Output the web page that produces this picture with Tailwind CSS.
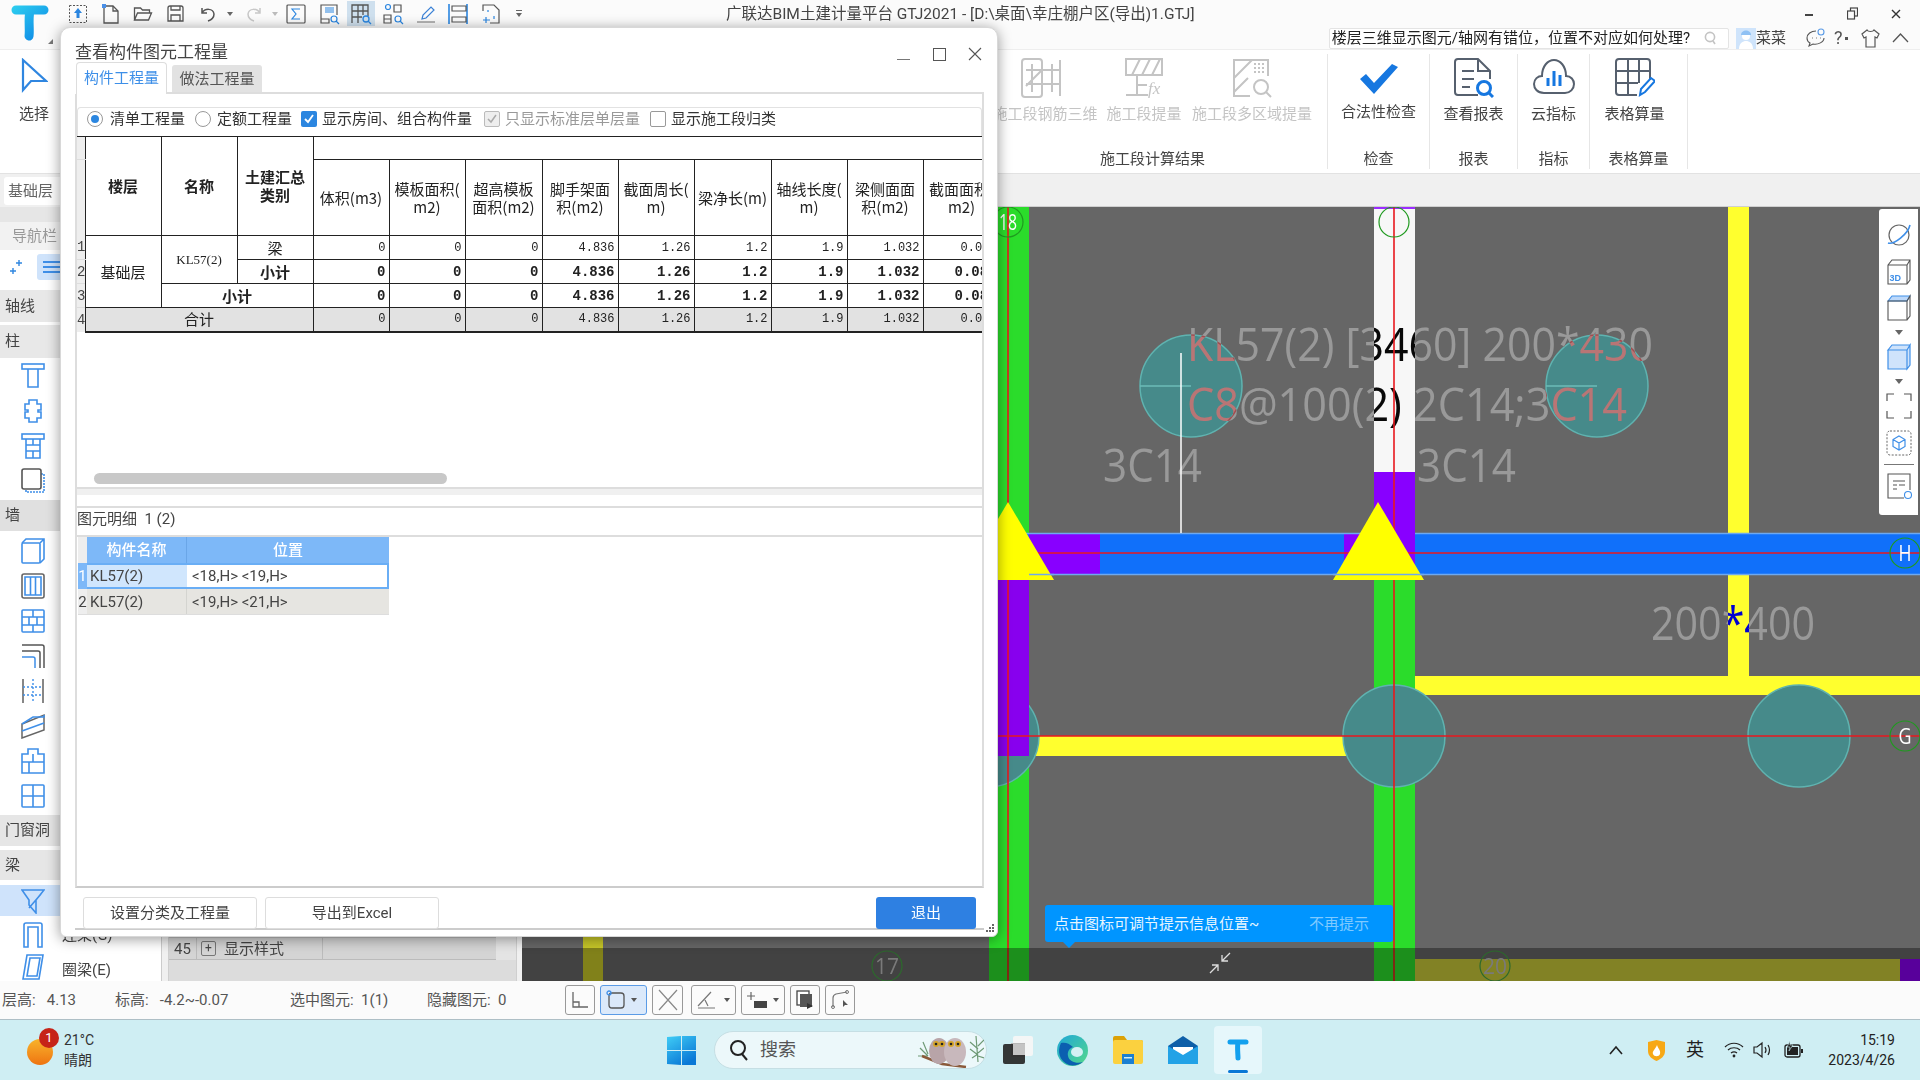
<!DOCTYPE html>
<html lang="zh-CN">
<head>
<meta charset="UTF-8">
<title>广联达BIM土建计量平台 GTJ2021</title>
<script src="https://cdn.jsdelivr.net/npm/@tailwindcss/browser@4"></script>
</head>
<body class="m-0">
<div class="relative w-[1920px] h-[1080px] overflow-hidden flex flex-col bg-white text-[#333] text-[15px] leading-[20px] font-['Roboto','Noto_Sans_CJK_SC',sans-serif]">

  <!-- title bar -->
  <div class="h-[50px] flex bg-[#fbfbfb] border-b border-[#eeeeee] shrink-0">
    <div class="relative w-[62px] shrink-0">
      <svg class="absolute left-[10px] top-[4px]" width="40" height="38" viewBox="0 0 40 38">
        <defs><linearGradient id="logoT" gradientUnits="userSpaceOnUse" x1="0" y1="0" x2="30" y2="38"><stop offset="0" stop-color="#2fd3f0"/><stop offset="1" stop-color="#0d87e6"/></linearGradient></defs>
        <path d="M6 6H34M20 6C18 16 20 26 19 32" fill="none" stroke="url(#logoT)" stroke-width="9" stroke-linecap="round"/>
      </svg>
      <div class="absolute left-[48px] top-[39px] w-0 h-0 border-l-[5px] border-l-transparent border-b-[5px] border-b-[#777]"></div>
    </div>
    <div class="flex-1 flex flex-col">
      <div class="h-[27px] flex items-center">
        <div class="flex items-center text-[#555]">
          <div class="w-[32.5px] h-[26px] flex items-center justify-center"><svg width="20" height="20" viewBox="0 0 20 20" fill="none"><rect x="1.5" y="1.5" width="17" height="17" stroke="#555" stroke-dasharray="2 1.5"/><path d="M10 4l4 5h-2.5v5h-3V9H6z" fill="#2b86e0"/></svg></div>
          <div class="w-[32.5px] h-[26px] flex items-center justify-center"><svg width="20" height="22" viewBox="0 0 20 22" fill="none" stroke="#555" stroke-width="1.3"><path d="M3 3h9l5 5v12H3z"/><path d="M12 3v5h5"/><rect x="1" y="1" width="4" height="4" fill="#4a90e8" stroke="none"/></svg></div>
          <div class="w-[32.5px] h-[26px] flex items-center justify-center"><svg width="20" height="18" viewBox="0 0 20 18" fill="none" stroke="#555" stroke-width="1.3"><path d="M1.5 15V3h6l2 2h7v3M1.5 15l3-7h14l-3 7z"/></svg></div>
          <div class="w-[32.5px] h-[26px] flex items-center justify-center"><svg width="19" height="19" viewBox="0 0 19 19" fill="none" stroke="#555" stroke-width="1.3"><path d="M2 4q0-2 2-2h11q2 0 2 2v13H2z"/><path d="M5 2v4h9V2M5 17v-6h9v6"/></svg></div>
          <div class="w-[32px] h-[26px] flex items-center justify-center"><svg width="18" height="18" viewBox="0 0 18 18" fill="none" stroke="#555" stroke-width="1.5"><path d="M3 3v5h5M3 8c3-5 11-5 12 1 0 4-3 6-6 7"/></svg></div>
          <div class="w-[12px] flex justify-center"><div class="w-0 h-0 border-x-[3px] border-x-transparent border-t-[4px] border-t-[#666]"></div></div>
          <div class="w-[33px] ml-px h-[26px] flex items-center justify-center"><svg width="18" height="18" viewBox="0 0 18 18" fill="none" stroke="#c8c8c8" stroke-width="1.5"><path d="M15 3v5h-5M15 8c-3-5-11-5-12 1 0 4 3 6 6 7"/></svg></div>
          <div class="w-[10px] flex justify-center"><div class="w-0 h-0 border-x-[3px] border-x-transparent border-t-[4px] border-t-[#bbb]"></div></div>
          <div class="w-[32.5px] h-[26px] flex items-center justify-center"><svg width="20" height="20" viewBox="0 0 20 20" fill="none" stroke="#555" stroke-width="1.2"><rect x="1" y="1" width="18" height="18" rx="1"/><path d="M14 5H6l4 5-4 5h8" stroke="#2b86e0"/></svg></div>
          <div class="w-[32.5px] h-[26px] flex items-center justify-center"><svg width="22" height="22" viewBox="0 0 22 22" fill="none" stroke="#555" stroke-width="1.2"><path d="M3 16V2h16v10M3 20v-4h8v4z"/><path d="M7 5h9M7 7h9M7 9h9" stroke="#2b86e0"/><circle cx="16" cy="16" r="3" stroke="#2b86e0"/><path d="M18 18l3 3" stroke="#2b86e0"/></svg></div>
          <div class="w-[28px] mx-[2px] h-[25px] bg-[#cfe0ee] flex items-center justify-center"><svg width="22" height="22" viewBox="0 0 22 22" fill="none" stroke="#555" stroke-width="1.3"><path d="M2 20V2h16v11M2 8h16M2 14h10M8 2v18M13 2v10"/><circle cx="16" cy="16" r="3" stroke="#2b86e0"/><path d="M18 18l3 3" stroke="#2b86e0"/></svg></div>
          <div class="w-[32.5px] h-[26px] flex items-center justify-center"><svg width="22" height="22" viewBox="0 0 22 22" fill="none" stroke="#555" stroke-width="1.2"><circle cx="6" cy="4" r="2.5" stroke="#2b86e0"/><path d="M12 2h7v7h-7zM2 12h7v8H2zM2 16h7"/><circle cx="16" cy="16" r="3" stroke="#2b86e0"/><path d="M18 18l3 3" stroke="#2b86e0"/></svg></div>
          <div class="w-[32.5px] h-[26px] flex items-center justify-center"><svg width="22" height="20" viewBox="0 0 22 20" fill="none" stroke="#555" stroke-width="1.2"><path d="M2 18h18" stroke="#888"/><path d="M7 15l1-4 8-8 3 3-8 8z" stroke="#3b82d6"/></svg></div>
          <div class="w-[32.5px] h-[26px] flex items-center justify-center"><svg width="22" height="22" viewBox="0 0 22 22" fill="none" stroke="#555" stroke-width="1.2"><path d="M2 1v20M20 1v20" stroke-width="1.6" stroke="#2b86e0"/><path d="M5 3h14v5H5zM5 14h14v5H5z"/></svg></div>
          <div class="w-[32.5px] h-[26px] flex items-center justify-center"><svg width="20" height="22" viewBox="0 0 20 22" fill="none" stroke="#555" stroke-width="1.2"><path d="M2 8V2h11l5 5v13H9"/><path d="M7 7v2M13 13v3M2 17h7M5 14v6" stroke="#2b86e0"/></svg></div>
          <div class="w-[24px] flex flex-col items-center gap-[2px]"><div class="w-[6px] h-px bg-[#666]"></div><div class="w-0 h-0 border-x-[3px] border-x-transparent border-t-[4px] border-t-[#666]"></div></div>
        </div>
        <div class="ml-[195px] text-[15.5px] leading-[26px] text-[#444] whitespace-nowrap">广联达BIM土建计量平台 GTJ2021 - [D:\桌面\幸庄棚户区(导出)1.GTJ]</div>
        <div class="ml-auto flex items-center">
          <div class="w-[8px] h-[2px] mt-[3px] bg-[#444] mr-[34px]"></div>
          <svg class="mr-[33px]" width="11" height="13" viewBox="0 0 11 13" fill="none" stroke="#444" stroke-width="1.2"><rect x="3.5" y="1" width="7" height="8"/><rect x="0.5" y="4" width="7" height="8" fill="#fbfbfb"/></svg>
          <svg class="mr-[19px]" width="10" height="10" viewBox="0 0 10 10" stroke="#333" stroke-width="1.4"><path d="M1 1l8 8M9 1l-8 8"/></svg>
        </div>
      </div>
      <div class="h-[22px] flex items-center">
        <div class="ml-[1267px] w-[400px] h-[21px] bg-white border border-[#e4e4e4] rounded-[2px] flex items-center overflow-hidden">
          <span class="text-[15px] leading-[20px] text-[#222] whitespace-nowrap w-[362px] overflow-hidden text-right pr-[2px]">楼层三维显示图元/轴网有错位，位置不对应如何处理?</span>
          <svg class="ml-[12px]" width="13" height="14" viewBox="0 0 13 14" fill="none" stroke="#c4c4c4" stroke-width="1.6"><circle cx="6" cy="6" r="4.6"/><path d="M9 10l2 3"/></svg>
        </div>
        <svg class="ml-[7px]" width="20" height="21" viewBox="0 0 20 21"><rect width="20" height="21" fill="#cfe4fb"/><circle cx="10" cy="8" r="4" fill="#fff"/><path d="M3 21c0-6 4-8 7-8s7 2 7 8z" fill="#fff"/><path d="M5 7c0-6 10-6 10 0z" fill="#8fc1f4"/></svg>
        <span class="text-[15px] text-[#444] whitespace-nowrap">菜菜</span>
        <svg class="ml-[20px]" width="20" height="20" viewBox="0 0 20 20" fill="none" stroke="#555" stroke-width="1.1"><path d="M10 3C5 3 1 6 1 10c0 2 1 4 3 5l-1 3 4-2c5 1 11-2 11-6"/><circle cx="15" cy="4" r="3" stroke="#5a9be6"/><path d="M6 10h.5M10 10h.5M14 10h.5" stroke-width="1.6"/></svg>
        <span class="ml-[8px] text-[18px] text-[#555]">?</span><div class="ml-[2px] w-[3px] h-[3px] bg-[#555]"></div>
        <svg class="ml-[13px]" width="19" height="19" viewBox="0 0 19 19" fill="none" stroke="#555" stroke-width="1.2"><path d="M6 1L1 5l2 4 2-1v10h9V8l2 1 2-4-5-4c-1 2-6 2-7 0z"/></svg>
        <svg class="ml-[12px]" width="17" height="10" viewBox="0 0 17 10" fill="none" stroke="#555" stroke-width="1.3"><path d="M1 9l7.5-8L16 9"/></svg>
      </div>
    </div>
  </div>

  <!-- ribbon -->
  <div class="h-[124px] shrink-0 flex bg-white border-b border-[#e2e2e2]">
    <div class="w-[60px] flex flex-col items-center pt-[8px]">
      <svg class="ml-[8px]" width="28" height="38" viewBox="0 0 28 38" fill="none" stroke="#2f86e0" stroke-width="2.2"><path d="M3 2v30l8-9h15z"/></svg>
      <div class="mt-[8px] text-[#444] ml-[8px] whitespace-nowrap">选择</div>
    </div>
    <div class="w-[930px]"></div>
    <div class="w-[338px] flex flex-col border-r border-[#e6e6e6] mt-[4px] mb-[4px]">
      <div class="flex text-[#c4c4c4] pt-[4px]">
        <div class="w-[110px] flex flex-col items-center">
          <svg class="mr-[8px]" width="42" height="40" viewBox="0 0 42 40" fill="none" stroke="#c4c4c4" stroke-width="2"><rect x="2" y="1" width="20" height="38" rx="3"/><path d="M6 12h34M6 26h34M12 6v28M22 6v28M32 6v28M6 28L22 12"/><path d="M40 2v36"/></svg>
          <div class="mt-[6px] whitespace-nowrap">施工段钢筋三维</div>
        </div>
        <div class="w-[88px] flex flex-col items-center">
          <svg width="40" height="40" viewBox="0 0 40 40" fill="none" stroke="#c4c4c4" stroke-width="2"><rect x="2" y="1" width="36" height="16"/><path d="M8 17L16 1M18 17L26 1M28 17L36 1M13 17v20M2 37h22M13 27h10"/><text x="24" y="36" font-size="17" font-style="italic" fill="#c4c4c4" stroke="none" font-family="Liberation Serif">fx</text></svg>
          <div class="mt-[6px] whitespace-nowrap">施工段提量</div>
        </div>
        <div class="w-[128px] flex flex-col items-center">
          <svg width="40" height="40" viewBox="0 0 40 40" fill="none" stroke="#c4c4c4" stroke-width="2"><path d="M18 38H2V2h34v16"/><path d="M2 20L20 2M2 34L16 20"/><path d="M22 6h12M22 10h12M22 14h12" stroke-dasharray="2 2"/><circle cx="29" cy="29" r="7"/><path d="M34 34l5 5"/></svg>
          <div class="mt-[6px] whitespace-nowrap">施工段多区域提量</div>
        </div>
      </div>
      <div class="mt-auto pr-[12px] text-center text-[#444]">施工段计算结果</div>
    </div>
    <div class="w-[102px] flex flex-col items-center border-r border-[#e6e6e6] mt-[4px] mb-[4px] pt-[4px]">
      <svg class="mt-[6px] mb-[2px]" width="38" height="30" viewBox="0 0 38 30"><path d="M0 15l6-5 8 9L32 0l6 3-24 27z" fill="#1677e0"/></svg>
      <div class="mt-[6px] text-[#444] whitespace-nowrap">合法性检查</div>
      <div class="mt-auto text-[#444]">检查</div>
    </div>
    <div class="w-[88px] flex flex-col items-center border-r border-[#e6e6e6] mt-[4px] mb-[4px] pt-[4px]">
      <svg width="40" height="40" viewBox="0 0 40 40" fill="none" stroke="#56606e" stroke-width="2"><path d="M24 37H4q-3 0-3-3V4q0-3 3-3h20l12 12v8M24 1v12h12"/><path d="M8 13h12M8 21h12M8 29h8"/><circle cx="30" cy="30" r="6.5" stroke="#1677e0" stroke-width="3"/><path d="M35 35l4 4" stroke="#1677e0" stroke-width="3"/></svg>
      <div class="mt-[6px] text-[#444] whitespace-nowrap">查看报表</div>
      <div class="mt-auto text-[#444]">报表</div>
    </div>
    <div class="w-[72px] flex flex-col items-center border-r border-[#e6e6e6] mt-[4px] mb-[4px] pt-[4px]">
      <svg width="42" height="38" viewBox="0 0 42 38" fill="none" stroke="#56606e" stroke-width="2"><path d="M11 35C4 35 1 30 1 26c0-5 4-8 8-8C9 8 15 2 21 2s12 6 12 16c5 0 8 4 8 8 0 5-4 9-9 9z"/><path d="M15 20v8M21 13v15M27 17v11" stroke="#1677e0" stroke-width="3"/></svg>
      <div class="mt-[8px] text-[#444] whitespace-nowrap">云指标</div>
      <div class="mt-auto text-[#444]">指标</div>
    </div>
    <div class="w-[98px] flex flex-col items-center border-r border-[#e6e6e6] mt-[4px] mb-[4px] pt-[4px]">
      <svg class="mr-[8px]" width="40" height="40" viewBox="0 0 40 40" fill="none" stroke="#56606e" stroke-width="2"><path d="M22 37H4q-3 0-3-3V4q0-3 3-3h28q3 0 3 3v18"/><path d="M1 13h34M1 25h22M13 1v36M24 1v24"/><path d="M25 37l1-6 10-11 4 3-10 11z" stroke="#1677e0"/></svg>
      <div class="mt-[6px] mr-[8px] text-[#444] whitespace-nowrap">表格算量</div>
      <div class="mt-auto text-[#444]">表格算量</div>
    </div>
  </div>

  <!-- sidebar + canvas area -->
  <div class="h-[807px] shrink-0 flex">
    <div class="w-[162px] shrink-0 flex flex-col overflow-hidden bg-white border-r border-[#ccc]">
      <div class="h-[33px] shrink-0 bg-[#f0f0f0] pl-[4px] flex items-center"><div class="w-full h-[28px] bg-white rounded-l-[3px] pl-[4px] text-[#666] leading-[28px]">基础层</div></div>
      <div class="h-[15px] shrink-0 bg-[#e6e6e6]"></div>
      <div class="h-[28px] shrink-0 bg-[#f2f2f2] pl-[12px] leading-[28px] text-[#999]">导航栏</div>
      <div class="h-[33px] shrink-0 flex items-center pl-[10px]">
        <svg width="14" height="16" viewBox="0 0 14 16" stroke="#2f86e0" stroke-width="1.4"><path d="M9 1v6M6 4h6M3 9v6M0 12h6"/></svg>
        <div class="ml-[13px] w-[30px] h-[26px] rounded-[3px] bg-[#cfe3fb] flex flex-col justify-center gap-[3px] pl-[6px]">
          <div class="w-[24px] h-[2px] bg-[#3f8fe8]"></div><div class="w-[24px] h-[2px] bg-[#3f8fe8]"></div><div class="w-[24px] h-[2px] bg-[#3f8fe8]"></div>
        </div>
      </div>
      <div class="h-[7px] shrink-0"></div>
      <div class="h-[32px] shrink-0 bg-[#e8e8e8] pl-[5px] leading-[32px] text-[#444]">轴线</div>
      <div class="h-[3px] shrink-0"></div>
      <div class="h-[33px] shrink-0 bg-[#e8e8e8] pl-[5px] leading-[33px] text-[#444]">柱</div>

      <div class="h-[35px] shrink-0 pl-[21px] flex items-center"><svg width="24" height="26" viewBox="0 0 24 26" fill="none" stroke="#3f8fe8" stroke-width="1.6"><rect x="1" y="1" width="22" height="5"/><path d="M7 6v18h10V6"/></svg></div>
      <div class="h-[35px] shrink-0 pl-[21px] flex items-center"><svg width="24" height="26" viewBox="0 0 24 26" fill="none" stroke="#3f8fe8" stroke-width="1.6"><path d="M8 2h8v4h4v6h-3v2h3v6h-4v4H8v-4H4v-6h3v-2H4V6h4z"/></svg></div>
      <div class="h-[35px] shrink-0 pl-[21px] flex items-center"><svg width="24" height="26" viewBox="0 0 24 26" fill="none" stroke="#3f8fe8" stroke-width="1.6"><rect x="1" y="1" width="22" height="5"/><path d="M5 6v19h14V6M5 12h14M5 18h14M12 6v6M12 18v7"/></svg></div>
      <div class="h-[35px] shrink-0 pl-[21px] flex items-center"><svg width="24" height="26" viewBox="0 0 24 26" fill="none" stroke-width="1.6"><path d="M20 6h3v18H5v-3" stroke="#3f8fe8" stroke-dasharray="2 1"/><rect x="1" y="1" width="19" height="20" rx="2" stroke="#555"/></svg></div>

      <div class="h-[2px] shrink-0"></div>
      <div class="h-[31px] shrink-0 bg-[#e0e0e0] pl-[5px] leading-[31px] text-[#444]">墙</div>
      <div class="h-[2px] shrink-0"></div>

      <div class="h-[35px] shrink-0 pl-[21px] flex items-center"><svg width="24" height="26" viewBox="0 0 24 26" fill="none" stroke="#3f8fe8" stroke-width="1.6"><rect x="1" y="5" width="18" height="20" rx="1"/><path d="M1 5l4-4h18v20l-4 4M19 5l4-4"/></svg></div>
      <div class="h-[35px] shrink-0 pl-[21px] flex items-center"><svg width="24" height="26" viewBox="0 0 24 26" fill="none" stroke-width="1.6"><rect x="1" y="1" width="22" height="24" rx="2" stroke="#666"/><path d="M4 4h16v18H4zM9.500 4v18M14.500 4v18" stroke="#3f8fe8"/></svg></div>
      <div class="h-[35px] shrink-0 pl-[21px] flex items-center"><svg width="24" height="26" viewBox="0 0 24 26" fill="none" stroke="#3f8fe8" stroke-width="1.6"><rect x="1" y="2" width="22" height="22" rx="1"/><path d="M1 9h22M1 17h22M12 2v7M8 9v8M16 9v8M12 17v7"/></svg></div>
      <div class="h-[35px] shrink-0 pl-[21px] flex items-center"><svg width="24" height="26" viewBox="0 0 24 26" fill="none" stroke-width="1.5"><path d="M1 2h20q2 0 2 2v21M1 8h16q2 0 2 2v15" stroke="#555"/><path d="M1 14h11q2 0 2 2v9" stroke="#3f8fe8"/></svg></div>
      <div class="h-[35px] shrink-0 pl-[21px] flex items-center"><svg width="24" height="26" viewBox="0 0 24 26" fill="none" stroke-width="1.4"><path d="M2 1v24M22 1v24" stroke="#555"/><path d="M12 1v24M2 9h20M2 17h20" stroke="#3f8fe8" stroke-dasharray="2 2"/></svg></div>
      <div class="h-[35px] shrink-0 pl-[21px] flex items-center"><svg width="24" height="26" viewBox="0 0 24 26" fill="none" stroke-width="1.5"><path d="M1 11L23 2v15L1 25z" stroke="#666"/><path d="M1 11L12 4h11L23 2M1 18l22-8" stroke="#3f8fe8"/></svg></div>
      <div class="h-[35px] shrink-0 pl-[21px] flex items-center"><svg width="24" height="26" viewBox="0 0 24 26" fill="none" stroke="#3f8fe8" stroke-width="1.6"><path d="M1 6h6V1h10v5h6v19H1zM1 14h22M12 6v8M8 14v11"/></svg></div>
      <div class="h-[35px] shrink-0 pl-[21px] flex items-center"><svg width="24" height="26" viewBox="0 0 24 26" fill="none" stroke="#3f8fe8" stroke-width="1.6"><rect x="1" y="2" width="22" height="22" rx="1"/><path d="M1 13h22M12 2v22"/></svg></div>

      <div class="h-[2px] shrink-0"></div>
      <div class="h-[31px] shrink-0 bg-[#e6e6e6] pl-[5px] leading-[31px] text-[#444]">门窗洞</div>
      <div class="h-[4px] shrink-0"></div>
      <div class="h-[30px] shrink-0 bg-[#e6e6e6] pl-[5px] leading-[30px] text-[#444]">梁</div>
      <div class="h-[5px] shrink-0"></div>
      <div class="h-[31px] shrink-0 bg-[#cfe3fb] pl-[21px] flex items-center"><svg width="24" height="26" viewBox="0 0 24 26" fill="none" stroke="#3f8fe8" stroke-width="1.6"><path d="M1 2h22l-8 10v13L8 17V12zM8 20L20 6"/></svg></div>
      <div class="h-[37px] shrink-0 pl-[23px] flex items-center"><svg width="20" height="26" viewBox="0 0 20 26" fill="none" stroke="#3f8fe8" stroke-width="1.6"><path d="M1 25V3q0-2 2-2h14q2 0 2 2v22h-4V5H5v20z"/></svg><span class="ml-[19px] text-[#444] whitespace-nowrap">连梁(G)</span></div>
      <div class="h-[28px] shrink-0 pl-[22px] flex items-center"><svg width="22" height="26" viewBox="0 0 22 26" fill="none" stroke="#3f8fe8" stroke-width="1.6"><path d="M5 1h16l-4 24H1zM8 4h10l-3 18H5z"/></svg><span class="ml-[18px] mt-[5px] text-[#444] whitespace-nowrap">圈梁(E)</span></div>
    </div>

    <div class="flex-1 flex flex-col">
      <div class="h-[33px] shrink-0 bg-[#f0f0f0] border-b border-[#cfcfcf]"></div>
      <div class="flex-1 flex">
        <!-- property panel, mostly under the dialog -->
        <div class="w-[6px] bg-[#f0f0f0]"></div>
        <div class="w-[349px] flex flex-col justify-end bg-[#e4e4e4] border-x border-[#cfcfcf]">
          <div class="h-[23px] flex items-center border-y border-[#bbb] mr-[20px] text-[#444] bg-[#d4d4d4]">
            <div class="w-[28px] text-center border-r border-[#bbb] h-full leading-[22px]">45</div>
            <div class="ml-[4px] w-[15px] h-[15px] border border-[#777] rounded-[2px] text-[12px] leading-[12px] text-center">+</div>
            <div class="ml-[8px] w-[99px] h-full leading-[22px] border-r border-[#bbb]">显示样式</div>
          </div>
          <div class="h-[21px] bg-[#dcdcdc]"></div>
        </div>
        <div class="w-[5px] bg-[#f0f0f0]"></div>
        <!-- CAD canvas -->
        <svg class="block" width="1398" height="774" viewBox="522 207 1398 774">
          <rect x="522" y="207" width="1398" height="774" fill="#666666"/>
          <!-- columns and beams -->
          <rect x="583" y="207" width="20" height="774" fill="#c6c628"/>
          <rect x="989" y="207" width="40" height="373" fill="#2bdc2b"/>
          <rect x="989" y="580" width="40" height="176" fill="#8800ee"/>
          <rect x="989" y="756" width="40" height="225" fill="#2bdc2b"/>
          <rect x="1374" y="207" width="41" height="265" fill="#f7f7f7"/>
          <rect x="1374" y="207" width="41" height="2" fill="#9a2cff"/>
          <rect x="1374" y="472" width="41" height="61" fill="#8800ff"/>
          <rect x="1374" y="574" width="41" height="407" fill="#2bdc2b"/>
          <rect x="1728" y="207" width="21" height="469" fill="#ffff2e"/>
          <rect x="1415" y="676" width="505" height="19" fill="#ffff2e"/>
          <rect x="1029" y="736" width="345" height="20" fill="#ffff2e"/>
          <rect x="998" y="533" width="922" height="41" fill="#1070fa"/>
          <rect x="1029" y="533" width="71" height="41" fill="#8800ff"/>
          <rect x="1344" y="533" width="71" height="41" fill="#8800ff"/>
          <path d="M1008 533.500H1374M1415 533.500H1920M1029 574.500H1920" stroke="#6ea8ee" stroke-width="1.5"/>
          <!-- piles -->
          <g fill="#468a8a" stroke="#5fb3b0" stroke-width="1.5">
            <circle cx="1191" cy="386" r="51"/>
            <circle cx="1597" cy="386" r="51"/>
            <circle cx="988" cy="736" r="51"/>
            <circle cx="1394" cy="736" r="51"/>
            <circle cx="1799" cy="736" r="51"/>
          </g>
          <rect x="989" y="580" width="40" height="176" fill="#8800ee"/>
          <path d="M1140 386H1191M1546 386H1597" stroke="#6cbcb8" stroke-width="1.5"/>
          <!-- annotations, inverted against what they cross -->
          <g class="mix-blend-difference font-['Open_Sans',sans-serif]" fill="#fff" font-size="45">
            <text x="1187" y="361" textLength="466" lengthAdjust="spacingAndGlyphs">KL57(2) [3460] 200*430</text>
            <text x="1187" y="421" textLength="440" lengthAdjust="spacingAndGlyphs">C8@100(2) 2C14;3C14</text>
            <text x="1103" y="482" textLength="99" lengthAdjust="spacingAndGlyphs">3C14</text>
            <text x="1417" y="482" textLength="99" lengthAdjust="spacingAndGlyphs">3C14</text>
            <text x="1651" y="640" textLength="164" lengthAdjust="spacingAndGlyphs">200*400</text>
          </g>
          <path d="M1181 353V533" stroke="#fff" stroke-width="1.5"/>
          <!-- axes -->
          <path d="M1008 207V981M1394 207V981M998 553H1920M998 736H1920" stroke="#e8181f" stroke-width="1.6"/>
          <path d="M962 580L1008 502L1054 580Z" fill="#ffff00"/>
          <path d="M1333 580L1378 502L1424 580Z" fill="#ffff00"/>
          <path d="M1029 574.500H1054M1333 574.500H1424" stroke="#6ea8ee" stroke-width="1.5"/>
          <g fill="none" stroke="#1f9a1f" stroke-width="1.2">
            <circle cx="1008" cy="222" r="15"/>
            <circle cx="1394" cy="222" r="15"/>
            <circle cx="1905" cy="553" r="15"/>
            <circle cx="1905" cy="736" r="15"/>
          </g>
          <g fill="#fff" font-size="21" text-anchor="middle" class="font-['Open_Sans',sans-serif]">
            <text x="1008" y="230" textLength="18" lengthAdjust="spacingAndGlyphs">18</text>
            <text x="1905" y="561" textLength="13" lengthAdjust="spacingAndGlyphs">H</text>
            <text x="1905" y="744" textLength="13" lengthAdjust="spacingAndGlyphs">G</text>
          </g>
          <!-- dim strip along the bottom -->
          <rect x="1415" y="959" width="485" height="22" fill="#c8c83a"/>
          <rect x="1900" y="959" width="20" height="22" fill="#8800ee"/>
          <rect x="522" y="948" width="1398" height="33" fill="#000" opacity=".35"/>
          <g fill="none" stroke="#2c6a2c" stroke-width="1.2">
            <circle cx="887" cy="966" r="15"/>
            <circle cx="1495" cy="966" r="15"/>
          </g>
          <g fill="#7a7a7a" font-size="21" text-anchor="middle" class="font-['Open_Sans',sans-serif]">
            <text x="887" y="974">17</text>
            <text x="1495" y="974">20</text>
          </g>
          <path d="M1230 953l-8 8M1222 955v6h6M1210 973l8-8M1218 971v-6h-6" fill="none" stroke="#ddd" stroke-width="1.3"/>
        </svg>
      </div>
    </div>
  </div>

  <!-- status bar -->
  <div class="h-[39px] shrink-0 flex items-center bg-[#fbfbfb] border-b border-[#aebfc6] text-[#555] whitespace-nowrap">
    <span class="ml-[2px] w-[113px]">层高:&nbsp;&nbsp;&nbsp;4.13</span>
    <span class="w-[175px]">标高:&nbsp;&nbsp;&nbsp;-4.2~-0.07</span>
    <span class="w-[137px]">选中图元:&nbsp;&nbsp;1(1)</span>
    <span class="w-[138px]">隐藏图元:&nbsp;&nbsp;0</span>
    <div class="flex items-center gap-[5px]">
      <div class="w-[30px] h-[30px] border border-[#999] rounded-[3px] flex items-center justify-center"><svg width="18" height="18" viewBox="0 0 18 18" fill="none" stroke="#666" stroke-width="1.3"><path d="M2 1v15h15M2 11h6v5"/></svg></div>
      <div class="w-[47px] h-[30px] border border-[#5a9be6] bg-[#dbe9fa] rounded-[3px] flex items-center pl-[5px] gap-[5px]"><svg width="20" height="20" viewBox="0 0 20 20" fill="none" stroke="#555" stroke-width="1.3"><rect x="3" y="3" width="15" height="15" rx="3"/><circle cx="3" cy="3" r="2" stroke="#3f8fe8"/></svg><div class="w-0 h-0 border-x-[3px] border-x-transparent border-t-[4px] border-t-[#555]"></div></div>
      <div class="w-[31px] h-[30px] border border-[#999] rounded-[3px] flex items-center justify-center"><svg width="22" height="24" viewBox="0 0 22 24" stroke="#888" stroke-width="1.2"><path d="M2 2l18 20M20 2L2 22"/></svg></div>
      <div class="ml-[3px] w-[45px] h-[30px] border border-[#999] rounded-[3px] flex items-center pl-[5px] gap-[7px]"><svg width="20" height="20" viewBox="0 0 20 20" fill="none" stroke="#777" stroke-width="1.2"><path d="M1 16L14 2M1 18h17M8 10l3 6"/></svg><div class="w-0 h-0 border-x-[3px] border-x-transparent border-t-[4px] border-t-[#555]"></div></div>
      <div class="w-[44px] h-[30px] border border-[#999] rounded-[3px] flex items-center pl-[4px] gap-[5px]"><svg width="22" height="20" viewBox="0 0 22 20"><path d="M5 2v8M1 6h8" stroke="#666" stroke-width="1.2"/><rect x="8" y="11" width="13" height="7" fill="#444"/></svg><div class="w-0 h-0 border-x-[3px] border-x-transparent border-t-[4px] border-t-[#555]"></div></div>
      <div class="w-[30px] h-[30px] border border-[#999] rounded-[3px] flex items-center justify-center"><svg width="20" height="22" viewBox="0 0 20 22"><rect x="2" y="2" width="12" height="14" fill="#fff" stroke="#444" stroke-width="1.3"/><rect x="5" y="5" width="12" height="13" fill="#555"/><path d="M12 14l6 3-6 3z" fill="#333"/></svg></div>
      <div class="w-[30px] h-[30px] border border-[#999] rounded-[3px] flex items-center justify-center"><svg width="20" height="22" viewBox="0 0 20 22" fill="none"><path d="M3 18V9q0-3 3-4l11-2" stroke="#777" stroke-width="1.2"/><circle cx="3" cy="18" r="1.5" stroke="#777"/><circle cx="17" cy="3" r="1.5" stroke="#777"/><path d="M13 11l5 5h-3l-2 2z" fill="#555"/></svg></div>
    </div>
  </div>

  <!-- taskbar -->
  <div class="h-[60px] shrink-0 flex items-center bg-[#cfeef3] text-[#222]">
    <div class="w-[667px] shrink-0 flex items-center">
      <div class="relative ml-[27px] w-[26px] h-[26px] mt-[4px] rounded-full bg-gradient-to-b from-[#f7b32b] to-[#ee7310]">
        <div class="absolute left-[12px] top-[-11px] w-[20px] h-[20px] rounded-full bg-[#c62418] text-white text-[13px] leading-[20px] text-center">1</div>
      </div>
      <div class="ml-[11px] text-[14px] leading-[20px] text-[#333]"><div>21°C</div><div>晴朗</div></div>
    </div>
    <svg class="shrink-0" width="29" height="29" viewBox="0 0 29 29">
      <defs><linearGradient id="winG" x1="0" y1="0" x2="0.6" y2="1"><stop offset="0" stop-color="#40cdf6"/><stop offset="1" stop-color="#0a78d6"/></linearGradient></defs>
      <path d="M0 1L14 0V14H0zM15 0H29V14H15zM0 15H14V29L0 28zM15 15H29V29H15z" fill="url(#winG)"/>
    </svg>
    <div class="ml-[18px] w-[273px] h-[38px] shrink-0 rounded-full bg-[#ecf8fa] border border-[#c6dfe4] flex items-center">
      <svg class="ml-[14px]" width="20" height="22" viewBox="0 0 20 22" fill="none" stroke="#222" stroke-width="2"><circle cx="9" cy="9" r="7"/><path d="M13 15l5 6"/></svg>
      <span class="ml-[11px] text-[18px] leading-[24px] text-[#555]">搜索</span>
      <svg class="ml-auto mr-[2px]" width="66" height="36" viewBox="0 0 66 36" fill="none">
        <path d="M2 16l8 8M5 10l5 12M0 24l10 0M58 4l2 26M52 10l8 7M52 17l8 6M66 8l-6 6M66 16l-6 5M54 26l6-4M66 26l-6-2" stroke="#6f9a76" stroke-width="1.2"/>
        <path d="M4 24l20 8 24 3" stroke="#8a5a3a" stroke-width="2.5"/>
        <ellipse cx="21" cy="19" rx="10" ry="13" fill="#b8a4a8"/>
        <ellipse cx="37" cy="20" rx="11" ry="14" fill="#c8b8bc"/>
        <circle cx="18" cy="12" r="3" fill="#d6a52a"/><circle cx="24" cy="12" r="3" fill="#d6a52a"/>
        <circle cx="33" cy="12" r="3" fill="#d6a52a"/><circle cx="40" cy="12" r="3" fill="#d6a52a"/>
        <circle cx="18" cy="12" r="1.3" fill="#222"/><circle cx="24" cy="12" r="1.3" fill="#222"/>
        <circle cx="33" cy="12" r="1.3" fill="#222"/><circle cx="40" cy="12" r="1.3" fill="#222"/>
      </svg>
    </div>
    <svg class="ml-[16px] shrink-0" width="30" height="30" viewBox="0 0 30 30"><rect x="10" y="1" width="20" height="20" rx="2" fill="#f4f6f6"/><rect x="8" y="8" width="14" height="14" fill="#b8b8b8"/><rect x="0" y="9" width="22" height="20" rx="2" fill="#262626" fill-opacity=".92"/><rect x="10" y="9" width="12" height="11" fill="#c4c4c4"/></svg>
    <svg class="ml-[24px] shrink-0" width="31" height="31" viewBox="0 0 31 31">
      <defs><linearGradient id="edgeA" x1="0" y1="0" x2="1" y2="1"><stop offset="0" stop-color="#1ea6d8"/><stop offset="1" stop-color="#54d98a"/></linearGradient></defs>
      <circle cx="15.500" cy="15.500" r="15.500" fill="url(#edgeA)"/>
      <path d="M4 8C0 16 2 26 12 30c5 1 10 0 14-3-6 2-14 0-15-6-1-5 2-8 5-9C12 8 8 7 4 8z" fill="#0b5fb0"/>
      <ellipse cx="20" cy="17" rx="6" ry="5" fill="#d4f0f4"/>
    </svg>
    <svg class="ml-[25px] shrink-0" width="30" height="28" viewBox="0 0 30 28"><path d="M0 2q0-2 2-2h9l3 4h14q2 0 2 2v4H0z" fill="#dca106"/><rect y="4" width="30" height="24" rx="2" fill="#fbd13f"/><rect x="9" y="18" width="12" height="10" fill="#1b7fd1"/><rect x="11" y="21" width="8" height="1.500" fill="#cfeef3"/></svg>
    <svg class="ml-[25px] shrink-0" width="30" height="28" viewBox="0 0 30 28"><path d="M0 10L15 0l15 10v18H0z" fill="#0e5fa8"/><path d="M5 11h20v8l-10 5-10-5z" fill="#fff"/><path d="M0 10l15 9 15-9v18H0z" fill="#22a2e6"/></svg>
    <div class="ml-[16px] w-[48px] h-[48px] shrink-0 rounded-[4px] bg-[#e6f7fb] relative flex justify-center pt-[12px]">
      <svg width="22" height="24" viewBox="0 0 22 24"><path d="M3 4H19M11 4C10 10 11 16 11 20" fill="none" stroke="#12a0ee" stroke-width="5" stroke-linecap="round"/></svg>
      <div class="absolute bottom-[1px] left-[14px] w-[20px] h-[3px] rounded-full bg-[#0a78d6]"></div>
    </div>
    <svg class="ml-[346px] shrink-0" width="16" height="10" viewBox="0 0 16 10" fill="none" stroke="#222" stroke-width="1.6"><path d="M2 9l6-7 6 7"/></svg>
    <svg class="ml-[24px] shrink-0" width="17" height="21" viewBox="0 0 17 21"><path d="M0 2l8.500-2L17 2v9c0 5-4 8-8.500 10C4 19 0 16 0 11z" fill="#f7a815"/><path d="M9 5c1 4 4 5 3 9-1 3-6 3-7 0-1-3 2-4 4-9z" fill="#fff"/></svg>
    <span class="ml-[21px] shrink-0 text-[18px] leading-[24px] text-[#222]">英</span>
    <svg class="ml-[20px] shrink-0" width="20" height="16" viewBox="0 0 20 16" fill="none" stroke="#222" stroke-width="1.2"><path d="M1 5c5-5 13-5 18 0M4 8c3-3 9-3 12 0M7 11c2-1.500 4-1.500 6 0"/><circle cx="10" cy="14" r=".8" fill="#222"/></svg>
    <svg class="ml-[9px] shrink-0" width="20" height="18" viewBox="0 0 20 18" fill="none" stroke="#222" stroke-width="1.2"><path d="M1 6h3l5-4v14l-5-4H1zM12 6q2 3 0 6M15 4q3 5 0 10"/></svg>
    <svg class="ml-[11px] shrink-0" width="20" height="18" viewBox="0 0 20 18"><rect x="1" y="4" width="15" height="12" rx="2" fill="none" stroke="#222" stroke-width="1.3"/><rect x="3" y="6" width="11" height="8" fill="#222"/><rect x="17" y="8" width="2" height="4" fill="#222"/><path d="M6 0L3 6h3l-1 4 4-6H6z" fill="#222" stroke="#cfeef3" stroke-width=".6"/></svg>
    <div class="ml-auto mr-[25px] text-right text-[14px] leading-[20px] text-[#222]"><div>15:19</div><div>2023/4/26</div></div>
  </div>

  <!-- dialog -->
  <div class="absolute left-[60px] top-[27px] w-[938px] h-[910px] bg-white rounded-t-[10px] rounded-b-[6px] border border-[#d8d8d8] shadow-[0_2px_14px_rgba(0,0,0,0.4)] pl-[14px] pr-[13px] flex flex-col">
    <div class="h-[35px] shrink-0 flex items-end">
      <span class="text-[17px] leading-[24px] text-[#444] mb-[-1px]">查看构件图元工程量</span>
      <div class="ml-auto flex items-center mr-[2px] mb-[2px]">
        <div class="w-[13px] h-px bg-[#777] mt-[10px] mr-[23px]"></div>
        <div class="w-[13px] h-[13px] border border-[#555] mr-[22px]"></div>
        <svg width="14" height="14" viewBox="0 0 14 14" stroke="#555" stroke-width="1.1"><path d="M1 1l12 12M13 1L1 13"/></svg>
      </div>
    </div>
    <div class="h-[31px] shrink-0 flex items-end gap-[5px] border-b-2 border-[#dddddd] ml-[1px] relative">
      <div class="w-[91px] h-[32px] mb-[-2px] bg-white border border-b-0 border-[#ddd] rounded-t-[4px] text-center leading-[30px] text-[#3d8fe8]">构件工程量</div>
      <div class="w-[90px] h-[27px] bg-[#e2e2e2] rounded-t-[3px] text-center leading-[28px] text-[#555]">做法工程量</div>
    </div>
    <div class="h-[794px] shrink-0 border-x-2 border-b-2 border-x-[#dddddd] border-b-[#cccccc] flex flex-col">
      <div class="h-[13px] shrink-0"></div>
      <div class="h-[29px] shrink-0 border border-b-0 border-[#e2e2e2] rounded-t-[4px] flex items-center pb-[6px] text-[#333] whitespace-nowrap">
        <div class="ml-[9px] w-[16px] h-[16px] rounded-full border border-[#999] flex items-center justify-center"><div class="w-[8px] h-[8px] rounded-full bg-[#2b86e0]"></div></div>
        <span class="ml-[7px]">清单工程量</span>
        <div class="ml-[10px] w-[16px] h-[16px] rounded-full border border-[#999]"></div>
        <span class="ml-[6px]">定额工程量</span>
        <div class="ml-[9px] w-[16px] h-[16px] rounded-[2px] bg-[#2b86e0] flex items-center justify-center"><svg width="12" height="12" viewBox="0 0 12 12" fill="none" stroke="#fff" stroke-width="1.8"><path d="M2 6l3 3 5-7"/></svg></div>
        <span class="ml-[5px]">显示房间、组合构件量</span>
        <div class="ml-[12px] w-[16px] h-[16px] rounded-[2px] border border-[#bbb] bg-[#eee] flex items-center justify-center"><svg width="12" height="12" viewBox="0 0 12 12" fill="none" stroke="#aaa" stroke-width="1.5"><path d="M2 6l3 3 5-7"/></svg></div>
        <span class="ml-[5px] text-[#999]">只显示标准层单层量</span>
        <div class="ml-[10px] w-[16px] h-[16px] rounded-[2px] border border-[#999]"></div>
        <span class="ml-[5px]">显示施工段归类</span>
      </div>
      <div class="h-[337px] shrink-0 overflow-hidden">
        <table class="table-fixed w-[923px] text-[#222] text-[15px] leading-[18px] font-['Noto_Sans_CJK_SC',sans-serif]">
          <colgroup>
            <col class="w-[8px]"><col class="w-[76px]"><col class="w-[76px]"><col class="w-[76px]"><col class="w-[76px]"><col class="w-[76px]"><col class="w-[77px]"><col class="w-[76px]"><col class="w-[76px]"><col class="w-[77px]"><col class="w-[76px]"><col class="w-[76px]"><col class="w-[77px]">
          </colgroup>
          <thead>
            <tr class="h-[23px]">
              <th class="bg-[#eeeeee] border-b border-[#dddddd] border-t border-t-[#222]"></th>
              <th rowspan="2" class="border border-[#222] font-bold">楼层</th>
              <th rowspan="2" class="border border-[#222] font-bold">名称</th>
              <th rowspan="2" class="border border-[#222] font-bold">土建汇总<br>类别</th>
              <th colspan="9" class="border border-[#222] border-r-0"></th>
            </tr>
            <tr class="h-[76px] font-normal">
              <th class="bg-[#eeeeee]"></th>
              <th class="border border-[#222] font-normal px-[1px]">体积(m3)</th>
              <th class="border border-[#222] font-normal px-[1px]">模板面积(<br>m2)</th>
              <th class="border border-[#222] font-normal px-[1px]">超高模板<br>面积(m2)</th>
              <th class="border border-[#222] font-normal px-[1px]">脚手架面<br>积(m2)</th>
              <th class="border border-[#222] font-normal px-[1px]">截面周长(<br>m)</th>
              <th class="border border-[#222] font-normal px-[1px]">梁净长(m)</th>
              <th class="border border-[#222] font-normal px-[1px]">轴线长度(<br>m)</th>
              <th class="border border-[#222] font-normal px-[1px]">梁侧面面<br>积(m2)</th>
              <th class="border border-[#222] font-normal px-[1px]">截面面积(<br>m2)</th>
            </tr>
          </thead>
          <tbody class="font-['Liberation_Mono',monospace] text-[12px]">
            <tr class="h-[24px] text-right">
              <td class="bg-[#eeeeee] border-b border-[#dddddd] text-[14px] text-left text-[#444]">1</td>
              <td rowspan="3" class="border border-[#222] text-center text-[15px] font-['Noto_Sans_CJK_SC',sans-serif]">基础层</td>
              <td rowspan="2" class="border border-[#222] text-center text-[13px] font-['Liberation_Serif',serif]">KL57(2)</td>
              <td class="border border-[#222] text-center text-[15px] font-['Noto_Sans_CJK_SC',sans-serif]">梁</td>
              <td class="border border-[#222] pr-[3px]">0</td><td class="border border-[#222] pr-[3px]">0</td><td class="border border-[#222] pr-[3px]">0</td><td class="border border-[#222] pr-[3px]">4.836</td><td class="border border-[#222] pr-[3px]">1.26</td><td class="border border-[#222] pr-[3px]">1.2</td><td class="border border-[#222] pr-[3px]">1.9</td><td class="border border-[#222] pr-[3px]">1.032</td><td class="border border-[#222] pr-[3px]">0.086</td>
            </tr>
            <tr class="h-[24px] text-right font-bold text-[14px]">
              <td class="bg-[#eeeeee] border-b border-[#dddddd] font-normal text-left text-[#444]">2</td>
              <td class="border border-[#222] text-center text-[15px] font-['Noto_Sans_CJK_SC',sans-serif]">小计</td>
              <td class="border border-[#222] pr-[3px]">0</td><td class="border border-[#222] pr-[3px]">0</td><td class="border border-[#222] pr-[3px]">0</td><td class="border border-[#222] pr-[3px]">4.836</td><td class="border border-[#222] pr-[3px]">1.26</td><td class="border border-[#222] pr-[3px]">1.2</td><td class="border border-[#222] pr-[3px]">1.9</td><td class="border border-[#222] pr-[3px]">1.032</td><td class="border border-[#222] pr-[3px]">0.086</td>
            </tr>
            <tr class="h-[24px] text-right font-bold text-[14px]">
              <td class="bg-[#eeeeee] border-b border-[#dddddd] font-normal text-left text-[#444]">3</td>
              <td colspan="2" class="border border-[#222] text-center text-[15px] font-['Noto_Sans_CJK_SC',sans-serif]">小计</td>
              <td class="border border-[#222] pr-[3px]">0</td><td class="border border-[#222] pr-[3px]">0</td><td class="border border-[#222] pr-[3px]">0</td><td class="border border-[#222] pr-[3px]">4.836</td><td class="border border-[#222] pr-[3px]">1.26</td><td class="border border-[#222] pr-[3px]">1.2</td><td class="border border-[#222] pr-[3px]">1.9</td><td class="border border-[#222] pr-[3px]">1.032</td><td class="border border-[#222] pr-[3px]">0.086</td>
            </tr>
            <tr class="h-[24px] text-right bg-[#e2e2e2]">
              <td class="bg-[#eeeeee] text-[14px] text-left text-[#444]">4</td>
              <td colspan="3" class="border border-[#222] border-b-2 text-center text-[15px] leading-[16px] font-['Noto_Sans_CJK_SC',sans-serif]">合计</td>
              <td class="border border-[#222] border-b-2 pr-[3px]">0</td><td class="border border-[#222] border-b-2 pr-[3px]">0</td><td class="border border-[#222] border-b-2 pr-[3px]">0</td><td class="border border-[#222] border-b-2 pr-[3px]">4.836</td><td class="border border-[#222] border-b-2 pr-[3px]">1.26</td><td class="border border-[#222] border-b-2 pr-[3px]">1.2</td><td class="border border-[#222] border-b-2 pr-[3px]">1.9</td><td class="border border-[#222] border-b-2 pr-[3px]">1.032</td><td class="border border-[#222] border-b-2 pr-[3px]">0.086</td>
            </tr>
          </tbody>
        </table>
      </div>
      <div class="h-[14px] shrink-0 pl-[17px]"><div class="w-[353px] h-[11px] rounded-full bg-[#c8c8c8]"></div></div>
      <div class="h-[8px] shrink-0 border-t-2 border-[#dddddd] bg-[#f0f0f0]"></div>
      <div class="h-[11px] shrink-0"></div>
      <div class="h-[31px] shrink-0 border-y-2 border-[#dddddd] leading-[22px] text-[#444] whitespace-nowrap">图元明细&nbsp;&nbsp;1 (2)</div>
      <div class="w-[311px] ml-px text-[#444]">
        <div class="h-[26px] flex bg-[#7db8f8] text-white font-medium">
          <div class="w-[9px] bg-[#eeeeee]"></div>
          <div class="w-[100px] text-center leading-[26px] border-r border-[#6aa6e8]">构件名称</div>
          <div class="flex-1 text-center leading-[26px]">位置</div>
        </div>
        <div class="h-[26px] flex">
          <div class="w-[9px] bg-[#7db8f8] text-white leading-[26px] text-center">1</div>
          <div class="w-[100px] bg-[#d0e6fd] border-y-2 border-[#6aaef5] pl-[3px] leading-[22px]">KL57(2)</div>
          <div class="flex-1 border-2 border-[#6aaef5] border-l-0 pl-[5px] leading-[22px]">&lt;18,H&gt; &lt;19,H&gt;</div>
        </div>
        <div class="h-[26px] flex bg-[#e6e5e1] border-b border-[#dddddd]">
          <div class="w-[9px] bg-[#eeeeee] leading-[26px] text-center">2</div>
          <div class="w-[100px] pl-[3px] leading-[26px] border-r border-[#d4d4d0]">KL57(2)</div>
          <div class="flex-1 pl-[5px] leading-[26px]">&lt;19,H&gt; &lt;21,H&gt;</div>
        </div>
      </div>
    </div>
    <div class="h-[42px] shrink-0 border-b-2 border-[#cccccc] pt-[9px] pl-[8px] pr-[8px] flex gap-[8px] text-[#444]">
      <div class="w-[174px] h-[32px] rounded-[3px] border border-[#dddddd] text-center leading-[30px]">设置分类及工程量</div>
      <div class="w-[174px] h-[32px] rounded-[3px] border border-[#dddddd] text-center leading-[30px]">导出到Excel</div>
      <div class="ml-auto w-[100px] h-[32px] rounded-[3px] bg-[#2e80e2] text-white text-center leading-[32px]">退出</div>
    </div>
    <svg class="absolute right-[2px] bottom-[2px]" width="10" height="10" viewBox="0 0 10 10" fill="#666"><path d="M7 0h2v2H7zM4 3h2v2H4zM7 3h2v2H7zM1 6h2v2H1zM4 6h2v2H4zM7 6h2v2H7z"/></svg>
  </div>

  <!-- canvas tool palette -->
  <div class="absolute left-[1879px] top-[209px] w-[39px] h-[306px] bg-white rounded-l-[3px] flex flex-col items-center pt-[13px]">
    <svg class="shrink-0" width="26" height="26" viewBox="0 0 26 26" fill="none" stroke="#666" stroke-width="1.2"><circle cx="13" cy="13" r="10"/><path d="M2 21C8 23 22 12 24 3" stroke="#3f8fe8" stroke-width="1.6"/></svg>
    <svg class="mt-[10px] shrink-0" width="26" height="28" viewBox="0 0 26 28" fill="none" stroke="#555" stroke-width="1.1"><path d="M2 7l4-5h18v20l-3 4H2zM2 7h19v19M21 7l3-5"/><text x="3.500" y="23" font-size="9" font-weight="700" fill="#3f8fe8" stroke="none" font-family="Liberation Sans">3D</text></svg>
    <svg class="mt-[8px] shrink-0" width="26" height="28" viewBox="0 0 26 28" fill="none" stroke="#555" stroke-width="1.1"><path d="M2 7l4-5h18l-3 5z" fill="#bcd8fa" stroke="#3f8fe8"/><path d="M2 7h19v19H2zM21 7l3-5v20l-3 4"/></svg>
    <div class="mt-[8px] shrink-0 w-0 h-0 border-x-[4px] border-x-transparent border-t-[5px] border-t-[#666]"></div>
    <svg class="mt-[8px] shrink-0" width="26" height="28" viewBox="0 0 26 28" fill="#cfe3fb" stroke="#3f8fe8" stroke-width="1.2"><path d="M2 7l4-5h18l-3 5zM2 7h19v19H2zM21 7l3-5v20l-3 4z"/></svg>
    <div class="mt-[8px] shrink-0 w-0 h-0 border-x-[4px] border-x-transparent border-t-[5px] border-t-[#666]"></div>
    <svg class="mt-[9px] shrink-0" width="26" height="26" viewBox="0 0 26 26" fill="none" stroke="#555" stroke-width="1.2"><path d="M1 8V1h7M18 1h7v7M25 18v7h-7M8 25H1v-7"/></svg>
    <svg class="mt-[11px] shrink-0" width="26" height="26" viewBox="0 0 26 26" fill="none"><rect x="1" y="1" width="24" height="24" rx="3" stroke="#666" stroke-dasharray="2 1.500"/><path d="M13 6l6 3.500v7L13 20l-6-3.500v-7zM7 9.500l6 3.500 6-3.500M13 13v7" stroke="#3f8fe8" stroke-width="1.2"/></svg>
    <div class="mt-[8px] shrink-0 w-[30px] h-px bg-[#777]"></div>
    <svg class="mt-[7px] shrink-0" width="26" height="28" viewBox="0 0 26 28" fill="none" stroke="#555" stroke-width="1.1"><path d="M18 26H2V2h22v16M7 9h12M7 13h4M13 13h6M7 17h4"/><circle cx="22" cy="23" r="3.500" stroke="#3f8fe8"/></svg>
  </div>

  <!-- hint bubble -->
  <div class="absolute left-[1045px] top-[905px] w-[348px] h-[37px] rounded-[3px] bg-[#0095ff] flex items-center whitespace-nowrap">
    <span class="ml-[9px] text-[#e6f5ff]">点击图标可调节提示信息位置~</span>
    <span class="ml-auto mr-[24px] text-[#7fcaff]">不再提示</span>
    <div class="absolute left-[18px] top-[37px] w-0 h-0 border-x-[6px] border-x-transparent border-t-[6px] border-t-[#0095ff]"></div>
  </div>
</div>
</body>
</html>
